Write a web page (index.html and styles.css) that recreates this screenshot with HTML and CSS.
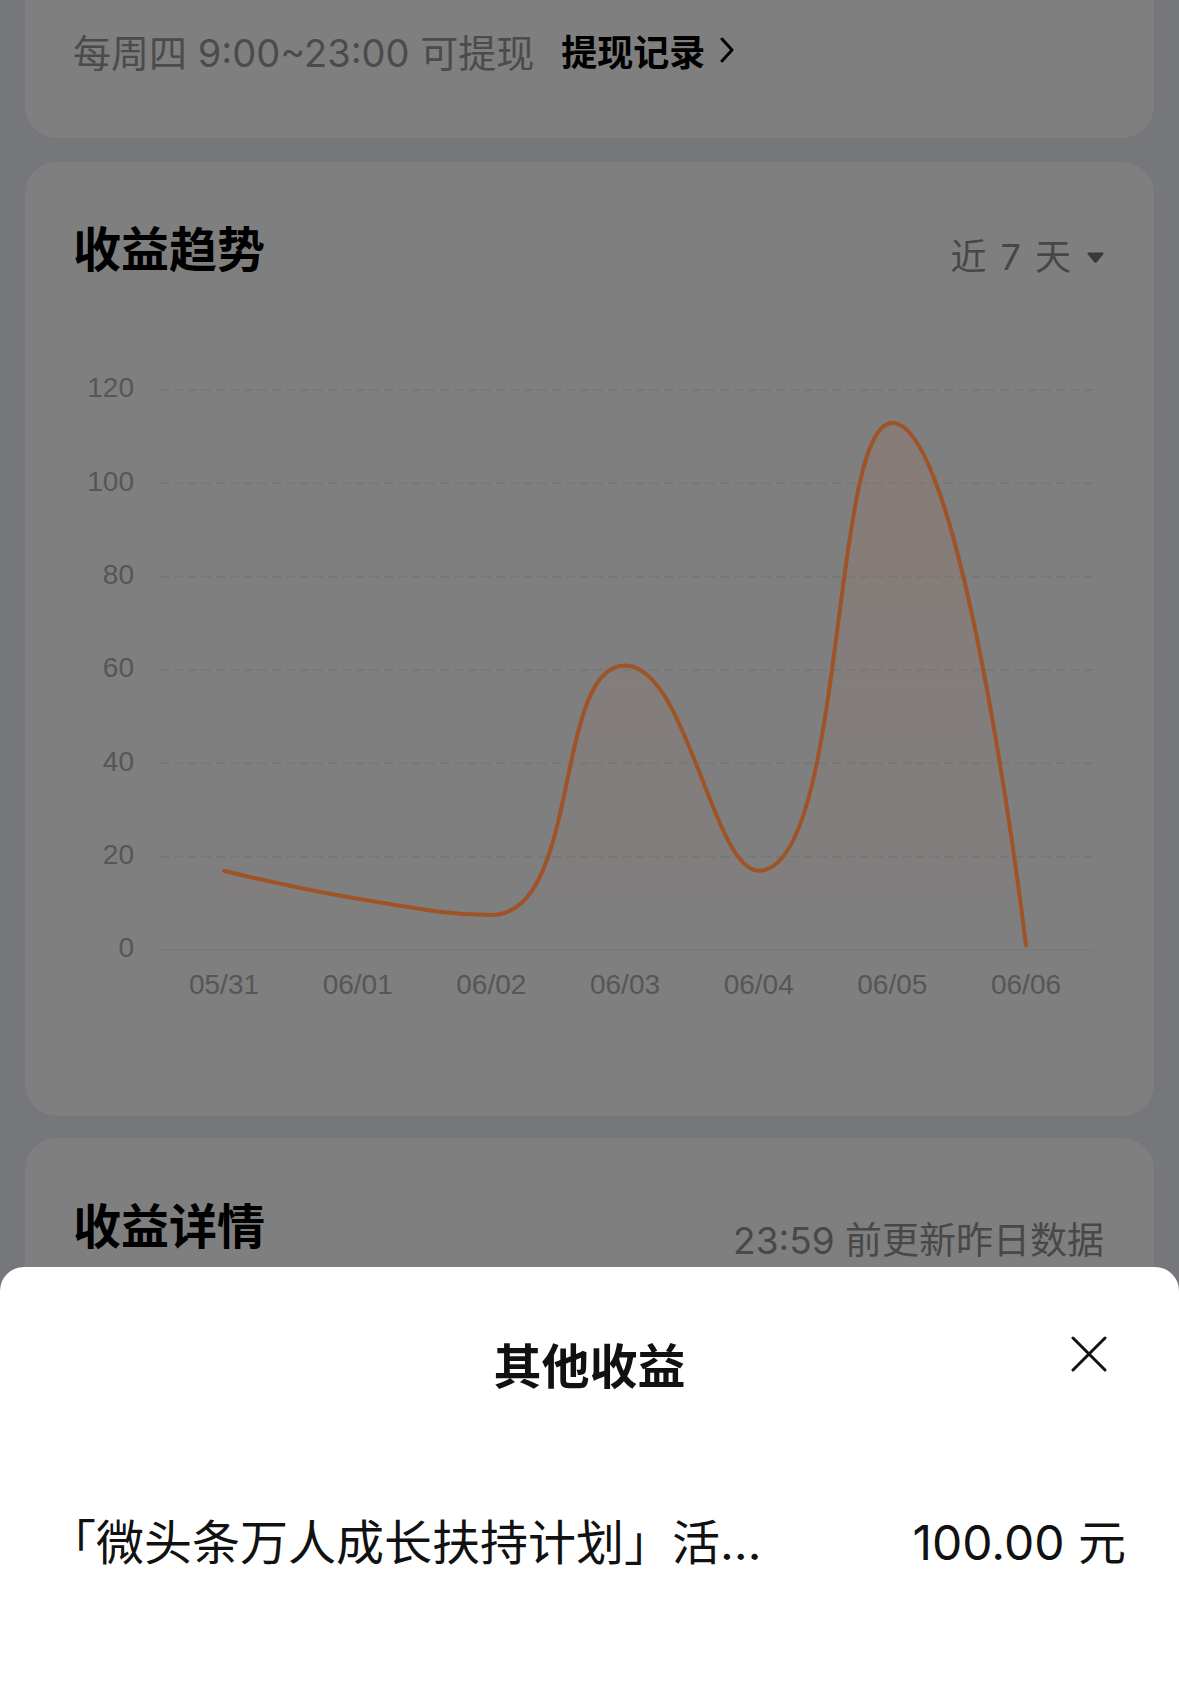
FILE: index.html
```html
<!DOCTYPE html>
<html lang="zh-CN">

<head>
    <meta charset="UTF-8">
    <meta name="viewport" content="width=device-width, initial-scale=1.0">
    <title>收益</title>
    <link rel="stylesheet" href="styles.css">
</head>

<body>
    <!-- 页面（弹层打开时整体变暗） -->
    <div class="page">
        <section class="card card-top">
            <div class="withdraw">
                <span class="withdraw-tip">每周四 9:00~23:00 可提现</span>
                <a href="javascript:;" class="withdraw-link">提现记录
                    <svg class="chevron" width="16" height="28" viewBox="0 0 16 28">
                        <path d="M3 3 L13 14 L3 25" fill="none" stroke="#000" stroke-width="3" stroke-linecap="round" stroke-linejoin="round" />
                    </svg>
                </a>
            </div>
        </section>

        <section class="card card-trend">
            <div class="card-head">
                <h2 class="card-title">收益趋势</h2>
                <div class="range">近 7 天
                    <svg width="17" height="11" viewBox="0 0 17 11">
                        <path d="M1.5 1.5 H15.5 L8.5 10 Z" fill="#3a3a3a" stroke="#3a3a3a" stroke-width="2" stroke-linejoin="round" />
                    </svg>
                </div>
            </div>

            <svg class="trend-chart" width="1030" height="700" viewBox="0 0 1030 700">
                <defs>
                    <linearGradient id="area" x1="0" y1="90" x2="0" y2="618" gradientUnits="userSpaceOnUse">
                        <stop offset="0" stop-color="#b06a52" stop-opacity="0.17" />
                        <stop offset="1" stop-color="#b06a52" stop-opacity="0" />
                    </linearGradient>
                </defs>
                <!-- 网格线 -->
                <g class="grid">
                    <line x1="87" y1="58" x2="1020" y2="58" />
                    <line x1="87" y1="151.3" x2="1020" y2="151.3" />
                    <line x1="87" y1="244.7" x2="1020" y2="244.7" />
                    <line x1="87" y1="338" x2="1020" y2="338" />
                    <line x1="87" y1="431.3" x2="1020" y2="431.3" />
                    <line x1="87" y1="524.7" x2="1020" y2="524.7" />
                </g>
                <line class="axis" x1="87" y1="618" x2="1020" y2="618" />
                <!-- y轴 -->
                <g class="y-labels">
                    <text x="61" y="58">120</text>
                    <text x="61" y="151.3">100</text>
                    <text x="61" y="244.7">80</text>
                    <text x="61" y="338">60</text>
                    <text x="61" y="431.3">40</text>
                    <text x="61" y="524.7">20</text>
                    <text x="61" y="618">0</text>
                </g>
                <!-- x轴 -->
                <g class="x-labels">
                    <text x="151" y="655">05/31</text>
                    <text x="284.7" y="655">06/01</text>
                    <text x="418.3" y="655">06/02</text>
                    <text x="552" y="655">06/03</text>
                    <text x="685.7" y="655">06/04</text>
                    <text x="819.3" y="655">06/05</text>
                    <text x="953" y="655">06/06</text>
                </g>
                <!-- 曲线 -->
                <path fill="url(#area)" d="M151 538.7 C151 538.7 217.4 555.55 284.7 566.7 C351 577.7 375.2 583 418.3 583 C508.9 583 480.3 333.4 552 333.4 C614 333.4 639.7 538.7 685.7 538.7 C773.4 538.7 757.2 90.9 819.3 90.9 C890.9 90.9 953 613.3 953 613.3 L953 618 L151 618 Z" />
                <path class="line" d="M151 538.7 C151 538.7 217.4 555.55 284.7 566.7 C351 577.7 375.2 583 418.3 583 C508.9 583 480.3 333.4 552 333.4 C614 333.4 639.7 538.7 685.7 538.7 C773.4 538.7 757.2 90.9 819.3 90.9 C890.9 90.9 953 613.3 953 613.3" />
            </svg>
        </section>

        <section class="card card-detail">
            <div class="card-head">
                <h2 class="card-title">收益详情</h2>
                <span class="update-tip">23:59 前更新昨日数据</span>
            </div>
        </section>
    </div>

    <!-- 其他收益弹层 -->
    <div class="sheet">
        <div class="sheet-head">
            <h3 class="sheet-title">其他收益</h3>
            <a href="javascript:;" class="sheet-close">
                <svg width="36" height="36" viewBox="0 0 36 36">
                    <path d="M2 2 L34 34 M34 2 L2 34" stroke="#111" stroke-width="3" stroke-linecap="round" />
                </svg>
            </a>
        </div>
        <div class="income-row">
            <span class="income-name">「微头条万人成长扶持计划」活动奖励</span>
            <span class="income-amount">100.00 元</span>
        </div>
    </div>
</body>

</html>
```

FILE: styles.css
```css
* {
    box-sizing: border-box;
}

body {
    margin: 0;
    height: 1705px;
    overflow: hidden;
    background-color: #76777a;
    font-family: Inter, "Noto Sans CJK SC", sans-serif;
}

.card {
    margin: 0 25px;
    background-color: #7f7f7f;
    border-radius: 32px;
}

/* 顶部卡片，只露出下半部分 */
.card-top {
    height: 138px;
    padding: 26px 48px 0;
    margin-bottom: 24px;
    border-radius: 0 0 32px 32px;
}

.withdraw {
    display: flex;
    align-items: center;
    height: 48px;
    font-size: 38px;
}

.withdraw-tip {
    color: #4b4b4b;
}

.withdraw-link {
    display: flex;
    align-items: center;
    gap: 14px;
    margin-left: 27px;
    font-size: 36px;
    color: #000;
    font-weight: 700;
    text-decoration: none;
}

.card-trend {
    padding: 64px 50px 84px 48px;
    margin-bottom: 22px;
}

.card-head {
    display: flex;
    justify-content: space-between;
    align-items: flex-start;
    height: 48px;
}

.card-title {
    margin: 0;
    font-size: 48px;
    line-height: 48px;
    font-weight: 700;
    color: #000;
}

.range {
    display: flex;
    align-items: center;
    gap: 16px;
    margin-top: 7px;
    font-size: 36px;
    line-height: 48px;
    word-spacing: 4px;
    color: #474747;
}

.trend-chart {
    display: block;
    margin-top: 58px;
}

.grid line {
    stroke: #777;
    stroke-width: 1.5;
    stroke-dasharray: 9 5;
}

.axis {
    stroke: #787878;
    stroke-width: 1.5;
}

.y-labels text,
.x-labels text {
    font-family: "Liberation Sans", Arial, sans-serif;
    font-size: 28px;
    fill: #565656;
    dominant-baseline: middle;
}

.y-labels text {
    text-anchor: end;
}

.x-labels text {
    text-anchor: middle;
}

.line {
    fill: none;
    stroke: #9e5428;
    stroke-width: 4;
    stroke-linecap: round;
}

.card-detail {
    height: 400px;
    padding: 65px 50px 0 48px;
}

.update-tip {
    margin-top: 14px;
    font-size: 37px;
    line-height: 48px;
    color: #484848;
}

/* 弹层 */
.sheet {
    position: fixed;
    left: 0;
    right: 0;
    bottom: 0;
    height: 438px;
    background-color: #fff;
    border-radius: 24px 24px 0 0;
}

.sheet-head {
    position: relative;
    padding-top: 76px;
}

.sheet-title {
    margin: 0;
    text-align: center;
    font-size: 48px;
    line-height: 48px;
    font-weight: 700;
    color: #111;
}

.sheet-close {
    position: absolute;
    top: 69px;
    right: 72px;
    width: 36px;
    height: 36px;
}

.sheet-close svg {
    display: block;
}

.income-row {
    display: flex;
    align-items: center;
    margin-top: 128px;
    padding: 0 53px 0 48px;
    font-size: 48px;
    line-height: 48px;
    color: #111;
}

.income-name {
    width: 724px;
    white-space: nowrap;
    overflow: hidden;
    text-overflow: ellipsis;
}

.income-amount {
    margin-left: auto;
    white-space: nowrap;
}
```
